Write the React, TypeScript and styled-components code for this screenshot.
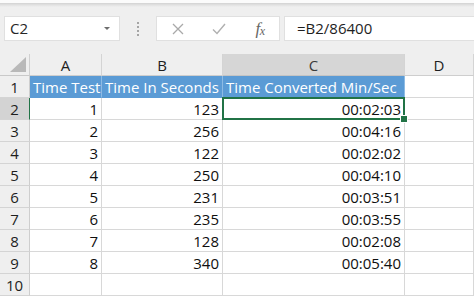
import React from "react";
import styled, { createGlobalStyle, css } from "styled-components";

const GlobalStyle = createGlobalStyle`
  html, body { margin: 0; padding: 0; background: #ffffff; }
  body { font-family: "Open Sans", "Noto Sans", sans-serif; overflow: hidden; }
  * { box-sizing: border-box; }
`;

const Page = styled.div`
  width: 474px;
  height: 296px;
  overflow: hidden;
  background: #ffffff;
`;

const Toolbar = styled.div`
  height: 54px;
  display: flex;
  align-items: flex-start;
  padding: 16px 0 0 4px;
  background: linear-gradient(
    #fbfbfb 0px,
    #fbfbfb 3px,
    #d2d2d2 3px,
    #e2e2e2 5px,
    #efefef 7px,
    #efefef 100%
  );
`;

const NameBox = styled.div`
  position: relative;
  width: 116px;
  height: 25px;
  background: #ffffff;
  border: 1px solid #e0e0e0;
  padding-left: 5px;
  font-size: 15px;
  line-height: 23px;
  color: #262626;
`;

const Caret = styled.span`
  position: absolute;
  right: 9px;
  top: 10px;
  width: 0;
  height: 0;
  border-left: 3px solid transparent;
  border-right: 3px solid transparent;
  border-top: 3px solid #6d6d6d;
`;

const Grip = styled.div`
  width: 36px;
  height: 25px;
  display: flex;
  flex-direction: column;
  align-items: center;
  justify-content: center;
  gap: 2px;
`;

const Dot = styled.span`
  width: 2px;
  height: 2px;
  background: #a5a5a5;
`;

const ButtonsBox = styled.div`
  width: 124px;
  height: 25px;
  background: #ffffff;
  border: 1px solid #e0e0e0;
  display: grid;
  grid-template-columns: 42px 40px 42px;
  align-items: center;
  justify-items: center;
`;

const Fx = styled.span`
  font-family: "Liberation Serif", "DejaVu Serif", serif;
  font-style: italic;
  font-size: 17px;
  line-height: 1;
  color: #666666;
  letter-spacing: -0.5px;
`;

const FxSub = styled.span`
  font-size: 12px;
  vertical-align: -1px;
`;

const FormulaInput = styled.div`
  flex: 1;
  height: 25px;
  margin-left: 4px;
  background: #ffffff;
  border: 1px solid #e0e0e0;
  border-right: none;
  padding-left: 12px;
  font-size: 15px;
  line-height: 23px;
  color: #1e1e1e;
`;

const Grid = styled.div`
  display: grid;
  grid-template-columns: 30px 72px 121px 182px 1fr;
  grid-auto-rows: 22px;
`;

const baseCell = css`
  font-size: 15px;
  line-height: 22px;
  white-space: nowrap;
  overflow: visible;
`;

const Corner = styled.div`
  background: #efefef;
  border-right: 1px solid #d0d0d0;
  border-bottom: 1px solid #c9c9c9;
  display: flex;
  align-items: flex-end;
  justify-content: flex-end;
  padding: 0 3px 3px 0;
`;

const ColHeader = styled.div<{ $selected?: boolean }>`
  ${baseCell}
  text-align: center;
  color: ${(p) => (p.$selected ? "#3a3a3a" : "#1e1e1e")};
  background: ${(p) => (p.$selected ? "#d6d6d6" : "#efefef")};
  border-right: 1px solid #d4d4d4;
  border-bottom: 1px solid ${(p) => (p.$selected ? "#c4c4c4" : "#cecece")};
`;

const RowHeader = styled.div<{ $selected?: boolean }>`
  ${baseCell}
  text-align: center;
  color: #1e1e1e;
  background: ${(p) => (p.$selected ? "#d3d3d3" : "#efefef")};
  border-right: 1px solid ${(p) => (p.$selected ? "#217346" : "#cecece")};
  border-bottom: 1px solid #d4d4d4;
`;

const Cell = styled.div<{ $align?: "left" | "right"; $fill?: boolean; $selected?: boolean }>`
  ${baseCell}
  position: relative;
  text-align: ${(p) => p.$align ?? "left"};
  padding: 0 3px;
  color: ${(p) => (p.$fill ? "#ffffff" : "#0f0f0f")};
  background: ${(p) => (p.$fill ? "#5b9bd5" : "#ffffff")};
  border-right: 1px solid ${(p) => (p.$fill ? "#8dbbe4" : "#d8d8d8")};
  border-bottom: 1px solid ${(p) => (p.$fill ? "#5b9bd5" : "#d8d8d8")};
  ${(p) =>
    p.$selected &&
    css`
      z-index: 2;
      &::after {
        content: "";
        position: absolute;
        left: -1px;
        top: -1px;
        right: -1px;
        bottom: -1px;
        border: 2px solid #217346;
        pointer-events: none;
      }
      &::before {
        content: "";
        position: absolute;
        right: -4px;
        bottom: -4px;
        width: 6px;
        height: 6px;
        background: #217346;
        border: 1px solid #ffffff;
        z-index: 3;
      }
    `}
`;

const data: [number, number, string][] = [
  [1, 123, "00:02:03"],
  [2, 256, "00:04:16"],
  [3, 122, "00:02:02"],
  [4, 250, "00:04:10"],
  [5, 231, "00:03:51"],
  [6, 235, "00:03:55"],
  [7, 128, "00:02:08"],
  [8, 340, "00:05:40"],
];

const CancelIcon = () => (
  <svg width="12" height="12" viewBox="0 0 12 12">
    <path d="M1 1 L11 11 M11 1 L1 11" stroke="#a9a9a9" strokeWidth="1.3" fill="none" />
  </svg>
);

const EnterIcon = () => (
  <svg width="14" height="12" viewBox="0 0 14 12">
    <path d="M1 6.5 L5 10.5 L13 1" stroke="#b0b0b0" strokeWidth="1.4" fill="none" />
  </svg>
);

const CornerTriangle = () => (
  <svg width="16" height="15" viewBox="0 0 16 15">
    <polygon points="16,0 16,15 0,15" fill="#b9b9b9" />
  </svg>
);

export default function App() {
  return (
    <Page>
      <GlobalStyle />
      <Toolbar>
        <NameBox>
          C2
          <Caret />
        </NameBox>
        <Grip>
          <Dot />
          <Dot />
          <Dot />
          <Dot />
        </Grip>
        <ButtonsBox>
          <CancelIcon />
          <EnterIcon />
          <Fx>
            f<FxSub>x</FxSub>
          </Fx>
        </ButtonsBox>
        <FormulaInput>=B2/86400</FormulaInput>
      </Toolbar>
      <Grid>
        <Corner>
          <CornerTriangle />
        </Corner>
        <ColHeader>A</ColHeader>
        <ColHeader>B</ColHeader>
        <ColHeader $selected>C</ColHeader>
        <ColHeader>D</ColHeader>

        <RowHeader>1</RowHeader>
        <Cell $fill>Time Test</Cell>
        <Cell $fill>Time In Seconds</Cell>
        <Cell $fill>Time Converted Min/Sec</Cell>
        <Cell />

        {data.map(([n, secs, time], i) => (
          <React.Fragment key={n}>
            <RowHeader $selected={i === 0}>{i + 2}</RowHeader>
            <Cell $align="right">{n}</Cell>
            <Cell $align="right">{secs}</Cell>
            <Cell $align="right" $selected={i === 0}>
              {time}
            </Cell>
            <Cell />
          </React.Fragment>
        ))}

        <RowHeader>10</RowHeader>
        <Cell />
        <Cell />
        <Cell />
        <Cell />
      </Grid>
    </Page>
  );
}
